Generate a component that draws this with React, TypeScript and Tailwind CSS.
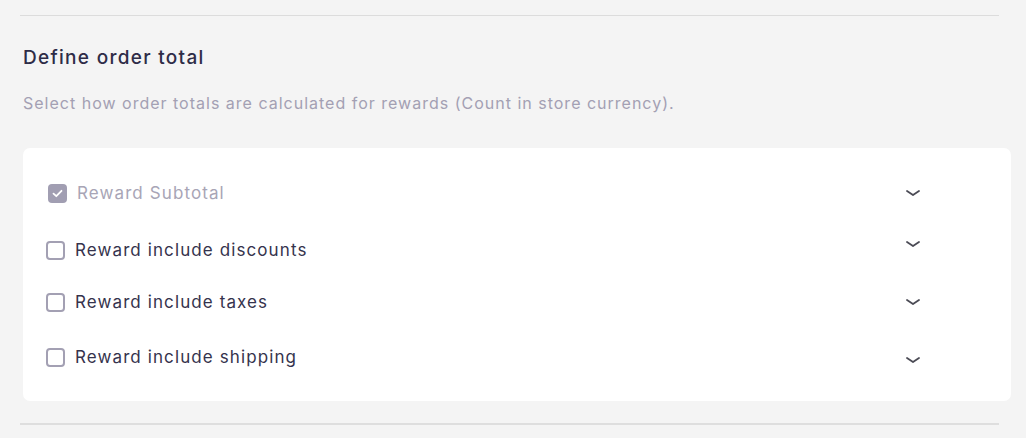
const rows = [
  { label: "Reward include discounts", row: "mt-[37px]", chevron: "mt-[-12px]" },
  { label: "Reward include taxes", row: "mt-[32px]", chevron: "mt-0" },
  { label: "Reward include shipping", row: "mt-[35px]", chevron: "mt-[6px]" },
];

function Chevron({ className }: { className?: string }) {
  return (
    <svg width="16" height="10" viewBox="0 0 16 10" className={className} fill="none">
      <path d="M2 3l6 4 6-4" stroke="#4b4b55" strokeWidth="1.8" strokeLinecap="round" strokeLinejoin="round" />
    </svg>
  );
}

function App() {
  return (
    <div className="h-[438px] w-full bg-[#f4f4f4] pt-[15px] font-['Inter',sans-serif]">
      <div className="ml-[20px] w-[979px] border-t border-[#dcdcdc]" />
      <h2 className="ml-[23px] mt-[30px] text-[19px] font-medium leading-[24px] tracking-[1.3px] text-[#2e2c47]">
        Define order total
      </h2>
      <p className="ml-[23px] mt-[22px] text-[16px] leading-[22px] tracking-[1px] text-[#a3a0b3]">
        Select how order totals are calculated for rewards (Count in store currency).
      </p>
      <div className="ml-[23px] mt-[34px] flex h-[253px] w-[988px] flex-col rounded-[7px] bg-white pl-[23px] pr-[90px] pt-[35px]">
        <div className="flex h-[20px] items-center justify-between">
          <div className="flex items-center">
            <span className="ml-[2px] flex h-[19px] w-[19px] items-center justify-center rounded-[4px] bg-[#a19eb2]">
              <svg width="11" height="9" viewBox="0 0 11 9" fill="none">
                <path d="M1.5 4.6l2.8 2.6L9.5 1.8" stroke="white" strokeWidth="1.8" strokeLinecap="round" strokeLinejoin="round" />
              </svg>
            </span>
            <span className="ml-[10px] text-[17px] leading-[20px] tracking-[1.1px] text-[#a8a5b6]">Reward Subtotal</span>
          </div>
          <Chevron />
        </div>
        {rows.map((r) => (
          <div key={r.label} className={`${r.row} flex h-[20px] items-center justify-between`}>
            <div className="flex items-center">
              <span className="h-[19px] w-[19px] rounded-[4px] border-2 border-[#a3a0b3] bg-white" />
              <span className="ml-[10px] text-[17px] leading-[20px] tracking-[1.1px] text-[#35334d]">{r.label}</span>
            </div>
            <Chevron className={r.chevron} />
          </div>
        ))}
      </div>
      <div className="ml-[20px] mt-[22px] w-[979px] border-t-2 border-[#dedede]" />
    </div>
  );
}

export default App;
